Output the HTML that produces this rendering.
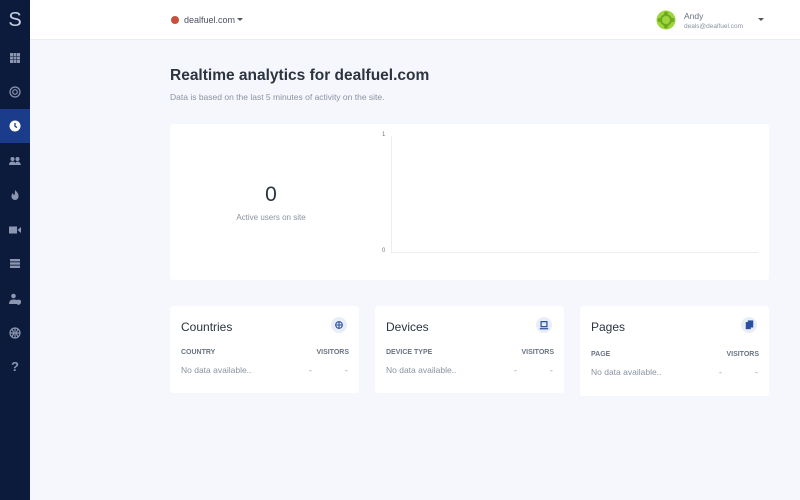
<!DOCTYPE html>
<html><head><style>
*{margin:0;padding:0;box-sizing:border-box}
body{width:800px;height:500px;background:#f5f7fc;font-family:"Liberation Sans",sans-serif;position:relative;overflow:hidden;color:#2b3440}
.sb{position:absolute;left:0;top:0;width:30px;height:500px;background:#0c1a3c}
.sb .act{position:absolute;left:0;top:109px;width:30px;height:34px;background:#1a3c8a}
.ic{position:absolute;left:9px;width:12px;height:12px}
.hd{position:absolute;left:30px;top:0;right:0;height:40px;background:#fff;border-bottom:1px solid #e8ecf3}
.card{position:absolute;background:#fff;border-radius:3px}
.t{font-size:12px;color:#2b3440}
.lbl{font-size:7px;font-weight:bold;color:#6a7383;position:absolute}
.nd{font-size:8.5px;color:#8a93a0;position:absolute}
.bub{position:absolute;width:16px;height:16px;border-radius:50%;background:#e8edf7}
</style></head><body>
<div class="sb">
<div style="position:absolute;left:0;top:9px;width:30px;text-align:center;color:#c8d0e4;font-size:20px;font-weight:300">S</div>
<div class="act"></div>
<svg class="ic" style="top:52px" viewBox="0 0 12 12" fill="#8c96b0"><rect x="1" y="1" width="3" height="3"/><rect x="4.5" y="1" width="3" height="3"/><rect x="8" y="1" width="3" height="3"/><rect x="1" y="4.5" width="3" height="3"/><rect x="4.5" y="4.5" width="3" height="3"/><rect x="8" y="4.5" width="3" height="3"/><rect x="1" y="8" width="3" height="3"/><rect x="4.5" y="8" width="3" height="3"/><rect x="8" y="8" width="3" height="3"/></svg>
<svg class="ic" style="top:86px" viewBox="0 0 12 12" fill="none" stroke="#8c96b0" stroke-width="1.2"><circle cx="6" cy="6" r="5"/><circle cx="6" cy="6" r="2.3"/></svg>
<svg class="ic" style="top:120px" viewBox="0 0 12 12"><circle cx="6" cy="6" r="5.5" fill="#fff"/><path d="M6 3v3.3l2 1.3" stroke="#1a3c8a" stroke-width="1.3" fill="none"/></svg>
<svg class="ic" style="top:155px" viewBox="0 0 12 12" fill="#8c96b0"><circle cx="3.5" cy="4" r="2"/><circle cx="8.5" cy="4" r="2"/><path d="M0 10q0-3.5 3.5-3.5T6 10zM6 10q0-3.5 2.5-3.5T12 10z"/></svg>
<svg class="ic" style="top:189px" viewBox="0 0 12 12" fill="#8c96b0"><path d="M6 1q4 3.5 3.5 6.5A3.5 3.5 0 0 1 2.5 7.5Q2.5 5 4 4q0 2 1.5 2Q6 4 6 1z"/></svg>
<svg class="ic" style="top:224px" viewBox="0 0 12 12" fill="#8c96b0"><rect x="0" y="2.5" width="8" height="7"/><path d="M8.5 6l3.5-3v6z"/></svg>
<svg class="ic" style="top:258px" viewBox="0 0 12 12" fill="#8c96b0"><rect x="1" y="1" width="10" height="2.4"/><rect x="1" y="4.3" width="10" height="2.4"/><rect x="1" y="7.6" width="10" height="2.4"/></svg>
<svg class="ic" style="top:293px" viewBox="0 0 12 12" fill="#8c96b0"><circle cx="4.5" cy="3" r="2.3"/><path d="M0 11q0-4.5 4.5-4.5T8 8v3z"/><path d="M9.5 6.5l2.5 1v2q0 1.5-2.5 2.5Q7 11 7 9.5v-2z"/></svg>
<svg class="ic" style="top:327px" viewBox="0 0 12 12" fill="none" stroke="#8c96b0" stroke-width="1.2"><circle cx="6" cy="6" r="5"/><path d="M1 6h10M6 1v10M3 2.5q3 3.5 0 7M9 2.5q-3 3.5 0 7"/></svg>
<div style="position:absolute;left:0;top:359px;width:30px;text-align:center;color:#8c96b0;font-size:13px;font-weight:bold">?</div>
</div>
<div class="hd">
<div style="position:absolute;left:141px;top:16px;width:8px;height:8px;border-radius:50%;background:#c9503a"></div>
<div style="position:absolute;left:154px;top:15px;font-size:9px;color:#4a5160">dealfuel.com</div>
<div style="position:absolute;left:207px;top:18px;border:3px solid transparent;border-top:3px solid #555"></div>
<svg style="position:absolute;left:626px;top:10px" width="20" height="20" viewBox="0 0 20 20"><circle cx="10" cy="10" r="9.5" fill="#9ed43e"/><circle cx="10" cy="10" r="5" fill="none" stroke="#6faa1e" stroke-width="2"/><circle cx="10" cy="3.5" r="2" fill="#6faa1e"/><circle cx="10" cy="16.5" r="2" fill="#6faa1e"/><circle cx="3.5" cy="10" r="2" fill="#6faa1e"/><circle cx="16.5" cy="10" r="2" fill="#6faa1e"/></svg>
<div style="position:absolute;left:654px;top:11px;font-size:8.5px;color:#6a7383">Andy</div>
<div style="position:absolute;left:654px;top:23px;font-size:6.5px;color:#8a93a0">deals@dealfuel.com</div>
<div style="position:absolute;left:728px;top:18px;border:3px solid transparent;border-top:3px solid #555"></div>
</div>
<div style="position:absolute;left:170px;top:67px;font-size:15.5px;font-weight:bold;color:#2b3440">Realtime analytics for dealfuel.com</div>
<div style="position:absolute;left:170px;top:92px;font-size:8.5px;color:#8a93a0">Data is based on the last 5 minutes of activity on the site.</div>
<div class="card" style="left:170px;top:124px;width:599px;height:156px">
<div style="position:absolute;left:0;width:202px;top:59px;text-align:center;font-size:21px;color:#2b3440">0</div>
<div style="position:absolute;left:0;width:202px;top:89px;text-align:center;font-size:8px;color:#8a93a0">Active users on site</div>
<div style="position:absolute;left:212px;top:8px;font-size:6px;color:#777">1</div>
<div style="position:absolute;left:212px;top:124px;font-size:6px;color:#777">0</div>
<div style="position:absolute;left:221px;top:12px;width:1px;height:116px;background:#eee"></div>
<div style="position:absolute;left:221px;top:128px;width:367px;height:1px;background:#eee"></div>
</div>
<div class="card" style="left:170px;top:306px;width:189px;height:87px">
<div class="t" style="position:absolute;left:11px;top:14px">Countries</div>
<div class="bub" style="left:161px;top:11px"></div>
<svg style="position:absolute;left:165px;top:15px" width="8" height="8" viewBox="0 0 12 12" fill="none" stroke="#2a4fa0" stroke-width="1.6"><circle cx="6" cy="6" r="5"/><path d="M1 6h10M6 1v10"/></svg>
<div class="lbl" style="left:11px;top:43px">COUNTRY</div><div class="lbl" style="right:10px;top:43px">VISITORS</div>
<div class="nd" style="left:11px;top:59px">No data available..</div><div class="nd" style="left:139px;top:59px">-</div><div class="nd" style="left:175px;top:59px">-</div>
</div>
<div class="card" style="left:375px;top:306px;width:189px;height:87px">
<div class="t" style="position:absolute;left:11px;top:14px">Devices</div>
<div class="bub" style="left:161px;top:11px"></div>
<svg style="position:absolute;left:164px;top:14px" width="10" height="10" viewBox="0 0 12 12" fill="none" stroke="#2a4fa0" stroke-width="1.5"><rect x="2.5" y="2" width="7" height="6"/><path d="M1 10.5h10"/></svg>
<div class="lbl" style="left:11px;top:43px">DEVICE TYPE</div><div class="lbl" style="right:10px;top:43px">VISITORS</div>
<div class="nd" style="left:11px;top:59px">No data available..</div><div class="nd" style="left:139px;top:59px">-</div><div class="nd" style="left:175px;top:59px">-</div>
</div>
<div class="card" style="left:580px;top:306px;width:189px;height:90px">
<div class="t" style="position:absolute;left:11px;top:14px">Pages</div>
<div class="bub" style="left:161px;top:11px"></div>
<svg style="position:absolute;left:165px;top:14px" width="9" height="10" viewBox="0 0 10 12" fill="#2a4fa0"><rect x="0.5" y="2.5" width="6" height="8.5"/><rect x="3" y="0.5" width="6.5" height="8.5"/></svg>
<div class="lbl" style="left:11px;top:45px">PAGE</div><div class="lbl" style="right:10px;top:45px">VISITORS</div>
<div class="nd" style="left:11px;top:61px">No data available..</div><div class="nd" style="left:139px;top:61px">-</div><div class="nd" style="left:175px;top:61px">-</div>
</div>
</body></html>
